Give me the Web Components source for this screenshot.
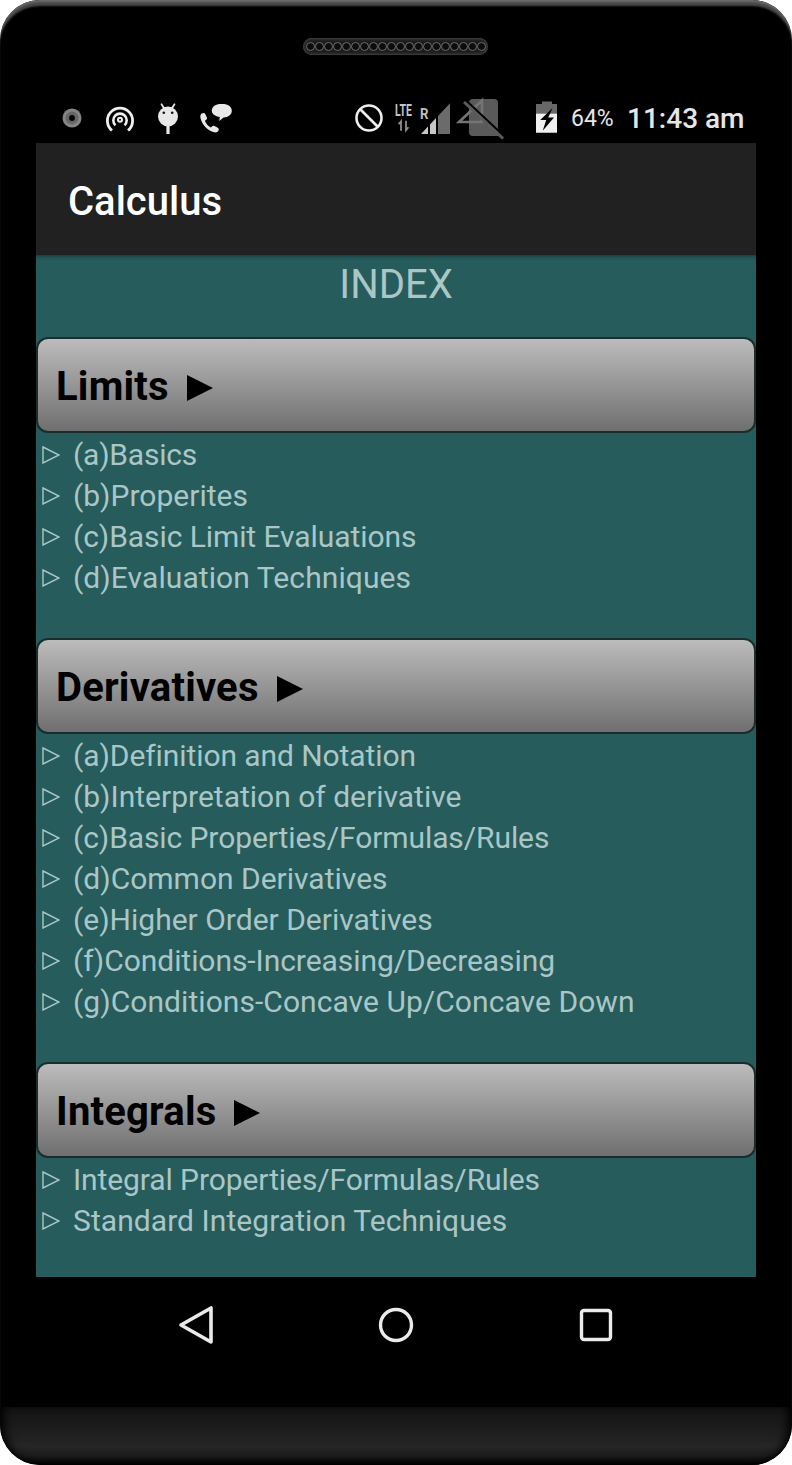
<!DOCTYPE html>
<html><head><meta charset="utf-8">
<style>
html,body{margin:0;padding:0;background:#fff}
body{width:792px;height:1465px;overflow:hidden;font-family:Roboto,"Liberation Sans",sans-serif}
</style></head><body>
<phone-frame>
  <status-bar slot="status"></status-bar>
  <app-bar slot="appbar" title="Calculus"></app-bar>
  <index-title>INDEX</index-title>
  <topic-section heading="Limits" gap="40">
    <topic-item style="letter-spacing:-.22px">(a)Basics</topic-item>
    <topic-item>(b)Properites</topic-item>
    <topic-item style="letter-spacing:-.08px">(c)Basic Limit Evaluations</topic-item>
    <topic-item style="letter-spacing:.08px">(d)Evaluation Techniques</topic-item>
  </topic-section>
  <topic-section heading="Derivatives" gap="40">
    <topic-item style="letter-spacing:-.08px">(a)Definition and Notation</topic-item>
    <topic-item>(b)Interpretation of derivative</topic-item>
    <topic-item style="letter-spacing:-.09px">(c)Basic Properties/Formulas/Rules</topic-item>
    <topic-item>(d)Common Derivatives</topic-item>
    <topic-item>(e)Higher Order Derivatives</topic-item>
    <topic-item style="letter-spacing:-.06px">(f)Conditions-Increasing/Decreasing</topic-item>
    <topic-item style="letter-spacing:.055px">(g)Conditions-Concave Up/Concave Down</topic-item>
  </topic-section>
  <topic-section heading="Integrals" gap="0">
    <topic-item style="letter-spacing:-.09px">Integral Properties/Formulas/Rules</topic-item>
    <topic-item style="letter-spacing:.065px">Standard Integration Techniques</topic-item>
  </topic-section>
  <nav-bar slot="nav"></nav-bar>
</phone-frame>
<script>
function def(name,html){
  customElements.define(name,class extends HTMLElement{
    connectedCallback(){
      if(this.shadowRoot)return;
      const r=this.attachShadow({mode:'open'});
      r.innerHTML=typeof html==='function'?html(this):html;
    }
  });
}
def('phone-frame',`<style>
:host{display:block;width:792px;height:1465px}
.body{width:792px;height:1465px;box-sizing:border-box;background:#000;border-radius:40px;position:relative;overflow:hidden;display:flex;flex-direction:column}
.corner{position:absolute;inset:0;border-radius:40px;box-shadow:inset 0 3px 2px -1px #6c6c6c,inset 0 7px 2px -1px #484848;pointer-events:none}
.top{height:96px;flex:none;position:relative}
.grill{position:absolute;left:303px;top:38px;width:185px;height:17px;box-sizing:border-box;border-radius:9px;background:#1c1c1c;box-shadow:inset 0 0 3px 1px #484848;display:flex;align-items:center;justify-content:center;padding:0 2px}
.grill i{display:block;width:9px;height:9px;box-sizing:border-box;border:1px solid #6e6e6e;border-radius:50%;background:#0c0c0c;flex:none}
.screen{margin:0 36px;width:720px;flex:none;display:flex;flex-direction:column;position:relative}
.content{background:#265c5c;height:1022px;box-sizing:border-box;position:relative;box-shadow:inset 0 5px 4px -4px rgba(0,0,0,.45)}
.chin{position:absolute;left:0;right:0;bottom:0;height:58px;border-radius:0 0 40px 40px;background:linear-gradient(#141414,#1a1a1a 30%,#262626 68%,#1c1c1c 84%,#000 100%)}
.chinshade{position:absolute;inset:0;border-radius:0 0 40px 40px;box-shadow:inset 8px 0 10px -4px #000,inset -8px 0 10px -4px #000}
</style>
<div class="body">
 <div class="corner"></div>
 <div class="top"><div class="grill">${'<i></i>'.repeat(20)}</div></div>
 <div class="screen">
  <slot name="status"></slot>
  <slot name="appbar"></slot>
  <div class="content"><slot></slot></div>
  <slot name="nav"></slot>
 </div>
 <div class="chin"><div class="chinshade"></div></div>
</div>`);
def('status-bar',`<style>
:host{display:block;height:47px;color:#e6e6e6}
.bar{position:relative;height:47px}
svg{position:absolute;overflow:visible}
.pct{position:absolute;left:535px;top:10px;font:400 23px/26px Roboto,"Liberation Sans",sans-serif;color:#e6e6e6}
.time{position:absolute;left:591px;top:8px;font:500 28px/30px Roboto,"Liberation Sans",sans-serif;color:#e6e6e6;white-space:nowrap}
.lte{position:absolute;left:358.500px;top:7px;font:700 16.500px/16px Roboto,sans-serif;color:#c4c4c4;transform:scaleX(.63);transform-origin:0 0}
.r{position:absolute;left:383.500px;top:10px;font:700 15.500px/16px Roboto,sans-serif;color:#bdbdbd;transform:scaleX(.85);transform-origin:0 0}
</style>
<div class="bar">
<svg style="left:0;top:0" width="720" height="47" viewBox="36 96 720 47">
 <circle cx="72" cy="118" r="9.500" fill="#858585"/><circle cx="72" cy="118" r="6.500" fill="#676767"/><circle cx="72" cy="118" r="2.900" fill="#000"/>
 <g fill="none" stroke="#eee" stroke-width="2.800">
  <path d="M112 130.500A12.600 12.600 0 1 1 128 130.500"/>
  <path d="M115.500 125.300A6.700 6.700 0 1 1 124.500 125.300" stroke-width="2.600"/>
  <circle cx="120" cy="119.800" r="2" stroke-width="2"/>
 </g>
 <g fill="#e8e8e8">
  <circle cx="168" cy="116.500" r="10"/>
  <rect x="166.400" y="124" width="3.200" height="10"/>
  <path d="M160.500 104l1.400-.8 3.300 5-1.800 1zM175.500 104l-1.400-.8-3.300 5 1.800 1z"/>
 </g>
 <circle cx="163.800" cy="112.700" r="1.300" fill="#111"/><circle cx="172.200" cy="112.700" r="1.300" fill="#111"/>
 <path transform="translate(-1.500 -.6)" fill="#e8e8e8" d="M203.500 114.200c1.300-1 2.800-.7 3.400.6l1.500 3.300c.4 1-.1 1.900-1 2.500l-1 .7c1 3 3.100 5.300 6 6.700l1-1c.8-.7 1.700-.9 2.600-.4l3.300 1.800c1.300.8 1.300 2.400.3 3.400-1.200 1.300-3 1.400-4.600.9-6.300-2-11.700-7.800-13.100-14.400-.3-1.700.3-3.600 1.600-4.600z"/>
 <path fill="#e8e8e8" d="M221 104h1.500c5.400 0 9.300 2.700 9.300 6.800s-3.500 6.500-8.200 6.800l-4.400 3.500.6-4c-4.500-.7-8-3-8-6.300 0-4.200 4-6.800 9.200-6.800z"/>
 <circle cx="369" cy="118" r="12.500" fill="none" stroke="#eee" stroke-width="2.600"/>
 <path d="M360 109l18 18" stroke="#eee" stroke-width="2.600"/>
 <path d="M401 130.700v-9.500l-2.400 3M406 120.800v9.500l2.400-3" fill="none" stroke="#8e8e8e" stroke-width="1.800"/>
 <path fill="#c8c8c8" d="M421 134l7-7.400V134zM430 124.500l6-6.400V134h-6z"/>
 <path fill="#6b6b6b" d="M438 116l12-12.700V134h-12z"/>
 <path d="M469 103a4 4 0 0 1 4-4h21a4 4 0 0 1 4 4v33h-25a4 4 0 0 1-4-4z" fill="#5a5a5a"/>
 <path d="M459 122L482 100.500V122z" fill="none" stroke="#747474" stroke-width="2.600"/>
 <path d="M466 100.500L505 137" stroke="#000" stroke-width="2.200"/>
 <path d="M464 102L503 138.500" stroke="#5c5c5c" stroke-width="3"/>
 <path d="M542 101.500h10v2.500h5v9.500h-21V104h6z" fill="#686868"/>
 <path d="M536 113.500h21v19.300h-21z" fill="#f0f0f0"/>
 <path d="M552.500 108l-12.300 12h6l-3.500 10.700 11.300-13.200h-5.700z" fill="#000"/>
</svg>
<span class="lte">LTE</span><span class="r">R</span>
<span class="pct">64%</span><span class="time">11:43 am</span>
</div>`);
def('app-bar',t=>`<style>
:host{display:block;height:112px;background:#212121;position:relative;z-index:1}
div{height:112px;box-sizing:border-box;padding:6px 0 0 32px;display:flex;align-items:center;color:#fff;font:500 40px/1 Roboto,"Liberation Sans",sans-serif}
</style><div>${t.getAttribute('title')}</div>`);
def('index-title',`<style>
:host{display:block;height:82px;box-sizing:border-box;text-align:center;color:#aac6c6;font:400 40px/60px Roboto,"Liberation Sans",sans-serif}
</style><slot></slot>`);
def('topic-section',t=>`<style>
:host{display:block;margin-bottom:${t.getAttribute('gap')}px}
.btn{height:96px;box-sizing:border-box;border:2px solid #1c2c2c;border-radius:12px;background:linear-gradient(#bcbcbc,#6f6f6f);padding:3px 0 0 18px;display:flex;align-items:center;gap:18px;color:#000;font:700 40px/1 Roboto,"Liberation Sans",sans-serif;letter-spacing:.2px}
svg{flex:none;width:26px;height:26px;margin-top:2px}
.list{display:flex;flex-direction:column;padding-top:1px}
</style>
<div class="btn"><span>${t.getAttribute('heading')}</span><svg viewBox="0 0 26 26"><path d="M0 0L26 13L0 26z" fill="#000"/></svg></div>
<div class="list"><slot></slot></div>`);
def('topic-item',`<style>
:host{display:flex;align-items:center;height:41px;color:#aac6c6;font:400 30px/41px Roboto,"Liberation Sans",sans-serif;white-space:nowrap}
svg{flex:none;width:18px;height:18px;margin-left:6px;margin-right:13px}
</style><svg viewBox="0 0 18 18"><path d="M1 1L17 9L1 17z" fill="none" stroke="#aac6c6" stroke-width="1.400"/></svg><span><slot></slot></span>`);
def('nav-bar',`<style>
:host{display:block;height:130px}
div{height:96px;display:flex;align-items:center;justify-content:center;gap:136px}
svg{width:64px;height:64px}
</style><div>
<svg viewBox="0 0 64 64"><path d="M17 32L47 15v34z" fill="none" stroke="#ebebeb" stroke-width="3.600" stroke-linejoin="round"/></svg>
<svg viewBox="0 0 64 64"><circle cx="32" cy="32" r="15.500" fill="none" stroke="#ebebeb" stroke-width="3.400"/></svg>
<svg viewBox="0 0 64 64"><rect x="17.500" y="17.500" width="29" height="29" rx="2.500" fill="none" stroke="#ebebeb" stroke-width="3.400"/></svg>
</div>`);
</script>
</body></html>
